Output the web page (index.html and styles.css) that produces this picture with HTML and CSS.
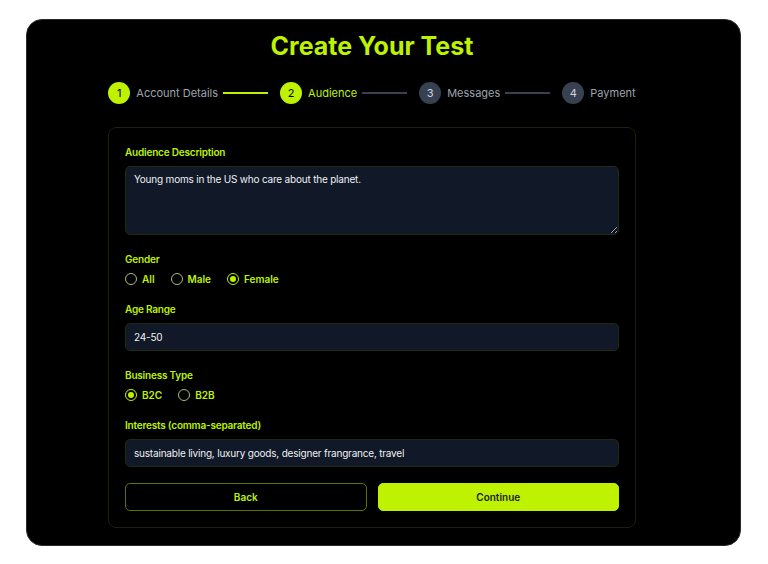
FILE: index.html
```html
<!DOCTYPE html>
<html lang="en">
<head>
    <meta charset="UTF-8">
    <meta name="viewport" content="width=device-width, initial-scale=1.0">
    <title>Create Your Test</title>
    <link rel="stylesheet" href="styles.css">
</head>
<body>
    <div class="panel">
        <div class="content">
            <h1 class="title">Create Your Test</h1>

            <div class="stepper">
                <div class="step done">
                    <span class="step-num">1</span>
                    <span class="step-label">Account Details</span>
                    <span class="step-line"></span>
                </div>
                <div class="step active">
                    <span class="step-num">2</span>
                    <span class="step-label">Audience</span>
                    <span class="step-line"></span>
                </div>
                <div class="step">
                    <span class="step-num">3</span>
                    <span class="step-label">Messages</span>
                    <span class="step-line"></span>
                </div>
                <div class="step">
                    <span class="step-num">4</span>
                    <span class="step-label">Payment</span>
                </div>
            </div>

            <form class="card">
                <div class="form-group">
                    <label for="audience">Audience Description</label>
                    <textarea id="audience" rows="3">Young moms in the US who care about the planet.</textarea>
                </div>
                <div class="form-group">
                    <label>Gender</label>
                    <div class="radio-row">
                        <label class="radio"><input type="radio" name="gender"> All</label>
                        <label class="radio"><input type="radio" name="gender"> Male</label>
                        <label class="radio"><input type="radio" name="gender" checked> Female</label>
                    </div>
                </div>
                <div class="form-group">
                    <label for="age">Age Range</label>
                    <input type="text" id="age" value="24-50">
                </div>
                <div class="form-group">
                    <label>Business Type</label>
                    <div class="radio-row">
                        <label class="radio"><input type="radio" name="biz" checked> B2C</label>
                        <label class="radio"><input type="radio" name="biz"> B2B</label>
                    </div>
                </div>
                <div class="form-group">
                    <label for="interests">Interests (comma-separated)</label>
                    <input type="text" id="interests" value="sustainable living, luxury goods, designer frangrance, travel">
                </div>
                <div class="actions">
                    <button type="button" class="btn btn-outline">Back</button>
                    <button type="submit" class="btn btn-primary">Continue</button>
                </div>
            </form>
        </div>
    </div>
</body>
</html>
```

FILE: styles.css
```css
body {
    margin: 0;
    padding: 19px 27px 19px 26px;
    background-color: #fff;
    font-family: Inter, "Noto Sans", sans-serif;
}
.panel {
    background-color: #000;
    border: 1px solid #2a2a2a;
    border-radius: 16px;
    padding: 11px 104px 17px 81px;
}
.content {
    width: 528px;
}
.title {
    margin: 0;
    text-align: center;
    color: #bef200;
    font-size: 25px;
    font-weight: 700;
    line-height: 30px;
}
.stepper {
    display: flex;
    align-items: center;
    justify-content: center;
    margin-top: 21px;
    height: 22px;
    white-space: nowrap;
}
.step {
    display: flex;
    align-items: center;
    flex-shrink: 0;
}
.step-num {
    width: 22px;
    height: 22px;
    flex-shrink: 0;
    border-radius: 50%;
    background-color: #374151;
    color: #d1d5db;
    font-size: 11px;
    display: flex;
    align-items: center;
    justify-content: center;
    margin-right: 6px;
}
.step-label {
    font-size: 11px;
    color: #9ca3af;
}
.step-line {
    width: 45px;
    height: 2px;
    flex-shrink: 0;
    background-color: #374151;
    margin: 0 12px 0 5px;
}
.step.done .step-num,
.step.active .step-num {
    background-color: #bef200;
    color: #000;
}
.step.done .step-line {
    background-color: #bef200;
}
.step.active .step-label {
    color: #bef200;
}
.card {
    margin-top: 23px;
    border: 1px solid #1b2108;
    border-radius: 8px;
    padding: 16px;
}
.form-group {
    margin-bottom: 16px;
}
.form-group > label {
    display: block;
    color: #bef200;
    font-size: 10px;
    font-weight: 600;
    letter-spacing: -0.2px;
    line-height: 16px;
    margin-bottom: 6px;
}
.form-group textarea,
.form-group input[type="text"] {
    display: block;
    width: 100%;
    box-sizing: border-box;
    background-color: #111827;
    border: 1px solid #1f2a12;
    border-radius: 5px;
    color: #eef0f3;
    font-family: Inter, "Noto Sans", sans-serif;
    font-size: 10px;
    letter-spacing: -0.2px;
    padding: 6px 8px;
}
.form-group textarea {
    height: 69px;
    resize: vertical;
    line-height: 15px;
    padding-top: 5px;
}
.form-group input[type="text"] {
    height: 28px;
}
.radio-row {
    display: flex;
    gap: 16px;
    height: 12px;
    align-items: center;
}
.radio {
    display: flex;
    align-items: center;
    gap: 5px;
    color: #bef200;
    font-size: 10px;
    font-weight: 600;
}
.radio input {
    appearance: none;
    margin: 0;
    width: 12px;
    height: 12px;
    border: 1px solid #a9bd7a;
    border-radius: 50%;
    box-sizing: border-box;
    display: flex;
    align-items: center;
    justify-content: center;
}
.radio input:checked {
    border-color: #bef200;
}
.radio input:checked::after {
    content: "";
    width: 6px;
    height: 6px;
    border-radius: 50%;
    background-color: #bef200;
}
.actions {
    display: flex;
    gap: 11px;
    margin-top: 16px;
}
.btn {
    flex: 1;
    height: 28px;
    border-radius: 5px;
    font-family: Inter, "Noto Sans", sans-serif;
    font-size: 10px;
    font-weight: 600;
    cursor: pointer;
}
.btn-outline {
    background-color: #000;
    border: 1px solid #5d7300;
    color: #bef200;
}
.btn-primary {
    background-color: #bef200;
    border: 1px solid #bef200;
    color: #1a1a1a;
}
```
